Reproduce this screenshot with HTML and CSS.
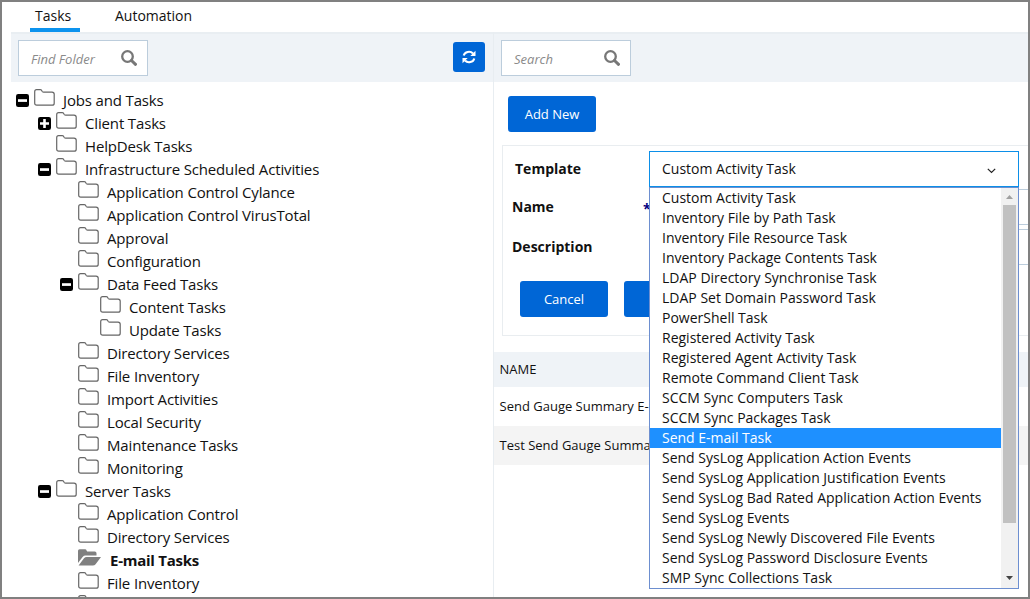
FILE: index.html
```
<!DOCTYPE html>
<html lang="en">
<head>
<meta charset="utf-8">
<title>Tasks</title>
<link rel="stylesheet" href="styles.css">
</head>
<body>
<svg class="defs" width="0" height="0">
  <symbol id="folder" viewBox="0 0 21 17"><path d="M.7 2.7Q.7.7 2.6.7H6.3Q7.6.7 8 2.2Q8.3 3.2 9.5 3.2H18Q20.2 3.2 20.2 5.3V14.2Q20.2 16.2 18.2 16.2H2.7Q.7 16.2.7 14.2Z" fill="#fff" stroke="#666" stroke-width="1.2"/></symbol>
  <symbol id="open" viewBox="0 0 24 17"><path d="M0 14V1.8Q0 .3 1.6.3H7Q8.3.3 8.7 1.7Q9 2.6 10.2 2.6H16.8Q18.5 2.6 18.5 4.2V6.6H7.5Q5.8 6.6 4.6 8Z" fill="#808080"/><path d="M.6 16.6 6 9.3Q7 7.9 8.8 7.9H23L17.6 15.2Q16.5 16.6 14.8 16.6Z" fill="#808080"/></symbol>
  <symbol id="minus" viewBox="0 0 13 13"><rect width="13" height="13" rx="2.2"/><path d="M2 5.2h9v2.7H2z" fill="#fff"/></symbol>
  <symbol id="plus" viewBox="0 0 13 13"><rect width="13" height="13" rx="2.2"/><path d="M2 5.2h9v2.6H2zM5.2 2h2.6v9H5.2z" fill="#fff"/></symbol>
  <symbol id="search" viewBox="0 0 16 16"><circle cx="6.5" cy="6.5" r="5.3" fill="none" stroke="#777" stroke-width="2.3"/><path d="M10.5 10.5 14.5 14.3" stroke="#777" stroke-width="3" stroke-linecap="round"/></symbol>
</svg>
<div class="window">
  <nav class="tabs"><a class="tab active">Tasks</a><a class="tab">Automation</a></nav>
  <div class="panes">
    <section class="left">
      <div class="bar">
        <div class="find"><span>Find Folder</span><svg width="16" height="16"><use href="#search"/></svg></div>
        <button class="refresh"><svg width="14" height="14" viewBox="0 0 14 14"><path d="M1.7 5.6A5.4 5 0 0 1 11 3.5M12.3 8.4A5.4 5 0 0 1 3 10.5" fill="none" stroke="#fff" stroke-width="2.1"/><path d="M13.5.8V6H8.3ZM.5 13.2V8H5.7Z" fill="#fff"/></svg></button>
      </div>
      <ul class="tree" id="tree"></ul>
    </section>
    <section class="right">
      <div class="bar"><div class="find"><span>Search</span><svg width="16" height="16"><use href="#search"/></svg></div></div>
      <button class="btn add">Add New</button>
      <div class="form">
        <div class="field template"><label>Template</label>
          <div class="combo">
            <div class="value"><span>Custom Activity Task</span><svg width="9" height="6" viewBox="0 0 9 6"><path d="M.8.8 4.5 4.5 8.2.8" fill="none" stroke="#222" stroke-width="1.2"/></svg></div>
            <div class="menu"><div class="options" id="options"></div>
              <div class="scroll"><svg width="7" height="4"><path d="M0 4 3.5 0 7 4Z" fill="#a0a0a0"/></svg><i class="thumb"></i><svg class="down" width="7" height="4"><path d="M0 0H7L3.5 4Z" fill="#444"/></svg></div>
            </div>
          </div>
        </div>
        <div class="field name"><label>Name</label><b class="req">*</b><div class="input"></div></div>
        <div class="field desc"><label>Description</label><div class="input"></div></div>
        <div class="actions"><button class="btn">Cancel</button><button class="btn"></button></div>
      </div>
      <div class="table">
        <div class="th">NAME</div>
        <div class="td">Send Gauge Summary E-mail</div>
        <div class="td alt">Test Send Gauge Summary</div>
      </div>
    </section>
  </div>
</div>
<script src="app.js"></script>
</body>
</html>
```
FILE: styles.css
```
* { box-sizing: border-box; }
body { margin: 0; font-family: "Open Sans", "Noto Sans", sans-serif; color: #111; font-size: 14px; overflow: hidden; }
.defs { position: absolute; }
svg { display: block; flex: none; }
button { font: inherit; border: 0; padding: 0; }
.window { width: 1030px; height: 599px; border: 2px solid #808080; background: #fff; display: flex; flex-direction: column; overflow: hidden; }
.tabs { display: flex; gap: 35px; height: 30px; padding-left: 28px; flex: none; font-size: 14px; }
.tab { height: 30px; line-height: 28px; }
.active { width: 50px; padding-left: 5px; border-bottom: 4px solid #0c93ee; }
.panes { display: flex; margin-left: 9px; flex: 1; min-height: 0; }
.left { width: 482px; flex: none; }
.right { flex: 1; min-width: 0; border-left: 1px solid #e8edf1; }
.bar { height: 50px; background: #eff3f7; border-top: 2px solid #e9eef2; padding: 6px 8px 0 7px; display: flex; justify-content: space-between; }
.find { width: 130px; height: 36px; background: #fff; border: 1px solid #bccddc; display: flex; align-items: center; justify-content: space-between; padding: 0 10px 0 12px; color: #8a8a8a; font-style: italic; font-size: 13px; }
.find span { padding-top: 2px; }
.refresh { width: 32px; height: 30px; margin-top: 2px; border-radius: 3px; background: #0066d6; display: flex; align-items: center; justify-content: center; }
.tree { list-style: none; margin: 0; padding: 7px 0 0 5px; font-size: 15px; }
.node { display: flex; height: 23px; align-items: flex-start; white-space: nowrap; letter-spacing: -.15px; }
.l1 { padding-left: 22px; }
.l2 { padding-left: 44px; }
.l3 { padding-left: 66px; }
.toggle { width: 13px; height: 13px; margin: 5px 5px 0 0; }
.icon { width: 21px; height: 17px; }
.name-text { margin-left: 8px; line-height: 23px; }
.current { font-weight: 700; letter-spacing: -.25px; }
.current .icon { width: 24px; }
.btn { width: 88px; height: 36px; border-radius: 3px; background: #0066d6; color: #fff; font-size: 13px; display: block; }
.add { margin: 14px 0 13px 14px; }
.form { margin-left: 8px; border: 1px solid #e9edf0; border-right: 0; height: 191px; padding: 5px 0 0 9px; }
.field { display: flex; align-items: center; white-space: nowrap; }
.field label { width: 130px; font-weight: 700; }
.template { height: 36px; padding-left: 3px; }
.template label { width: 134px; flex: none; padding-bottom: 2px; }
.name { height: 35px; margin-top: 2px; }
.name label { width: 131px; }
.req { color: #000080; width: 6px; padding-top: 4px; }
.desc { height: 36px; margin-top: 5px; }
.desc label { width: 137px; padding-bottom: 2px; }
.input { flex: 1; height: 36px; border: solid #bccddc; border-width: 1px 0; }
.combo { width: 370px; flex: none; position: relative; }
.value { height: 36px; border: 1px solid #0c8fe8; background: #fff; padding: 0 22px 0 12px; display: flex; align-items: center; justify-content: space-between; }
.value span { padding-bottom: 2px; }
.value svg { margin-top: 3px; }
.menu { position: absolute; z-index: 2; top: 36px; left: 0; width: 370px; height: 402px; background: #fff; border: 1px solid #6d8fd0; display: flex; }
.options { flex: 1; overflow: hidden; }
.option { height: 20px; line-height: 20px; padding-left: 12px; white-space: nowrap; }
.selected { background: #1e90ff; color: #fff; }
.scroll { width: 17px; background: #f1f1f1; display: flex; flex-direction: column; align-items: center; padding: 7px 0 8px; }
.thumb { width: 13px; height: 318px; background: #c1c1c1; margin-top: 6px; }
.down { margin-top: auto; }
.actions { display: flex; gap: 16px; padding: 16px 0 0 8px; }
.table { margin-top: 16px; font-size: 13px; white-space: nowrap; }
.th { height: 35px; line-height: 35px; background: #eff3f7; padding-left: 5.5px; }
.td { height: 39px; line-height: 39px; padding-left: 5.5px; }
.alt { background: #f4f4f4; }
```
FILE: app.js
```
// level, toggle, label
const nodes = [
  [0, 'minus', 'Jobs and Tasks'], [1, 'plus', 'Client Tasks'], [1, '', 'HelpDesk Tasks'],
  [1, 'minus', 'Infrastructure Scheduled Activities'], [2, '', 'Application Control Cylance'],
  [2, '', 'Application Control VirusTotal'], [2, '', 'Approval'], [2, '', 'Configuration'],
  [2, 'minus', 'Data Feed Tasks'], [3, '', 'Content Tasks'], [3, '', 'Update Tasks'],
  [2, '', 'Directory Services'], [2, '', 'File Inventory'], [2, '', 'Import Activities'],
  [2, '', 'Local Security'], [2, '', 'Maintenance Tasks'], [2, '', 'Monitoring'],
  [1, 'minus', 'Server Tasks'], [2, '', 'Application Control'], [2, '', 'Directory Services'],
  [2, 'current', 'E-mail Tasks'], [2, '', 'File Inventory'], [2, '', '']
];
document.getElementById('tree').innerHTML = nodes.map(([level, state, label]) => {
  const current = state === 'current';
  const toggle = state && !current ? `<use href="#${state}"/>` : '';
  return `<li class="node l${level}${current ? ' current' : ''}"><svg class="toggle">${toggle}</svg><svg class="icon"><use href="#${current ? 'open' : 'folder'}"/></svg><span class="name-text">${label}</span></li>`;
}).join('');

const options = ['Custom Activity Task', 'Inventory File by Path Task', 'Inventory File Resource Task',
  'Inventory Package Contents Task', 'LDAP Directory Synchronise Task', 'LDAP Set Domain Password Task',
  'PowerShell Task', 'Registered Activity Task', 'Registered Agent Activity Task', 'Remote Command Client Task',
  'SCCM Sync Computers Task', 'SCCM Sync Packages Task', 'Send E-mail Task', 'Send SysLog Application Action Events',
  'Send SysLog Application Justification Events', 'Send SysLog Bad Rated Application Action Events',
  'Send SysLog Events', 'Send SysLog Newly Discovered File Events', 'Send SysLog Password Disclosure Events',
  'SMP Sync Collections Task'];
document.getElementById('options').innerHTML = options.map(o =>
  `<div class="option${o === 'Send E-mail Task' ? ' selected' : ''}">${o}</div>`).join('');
```
